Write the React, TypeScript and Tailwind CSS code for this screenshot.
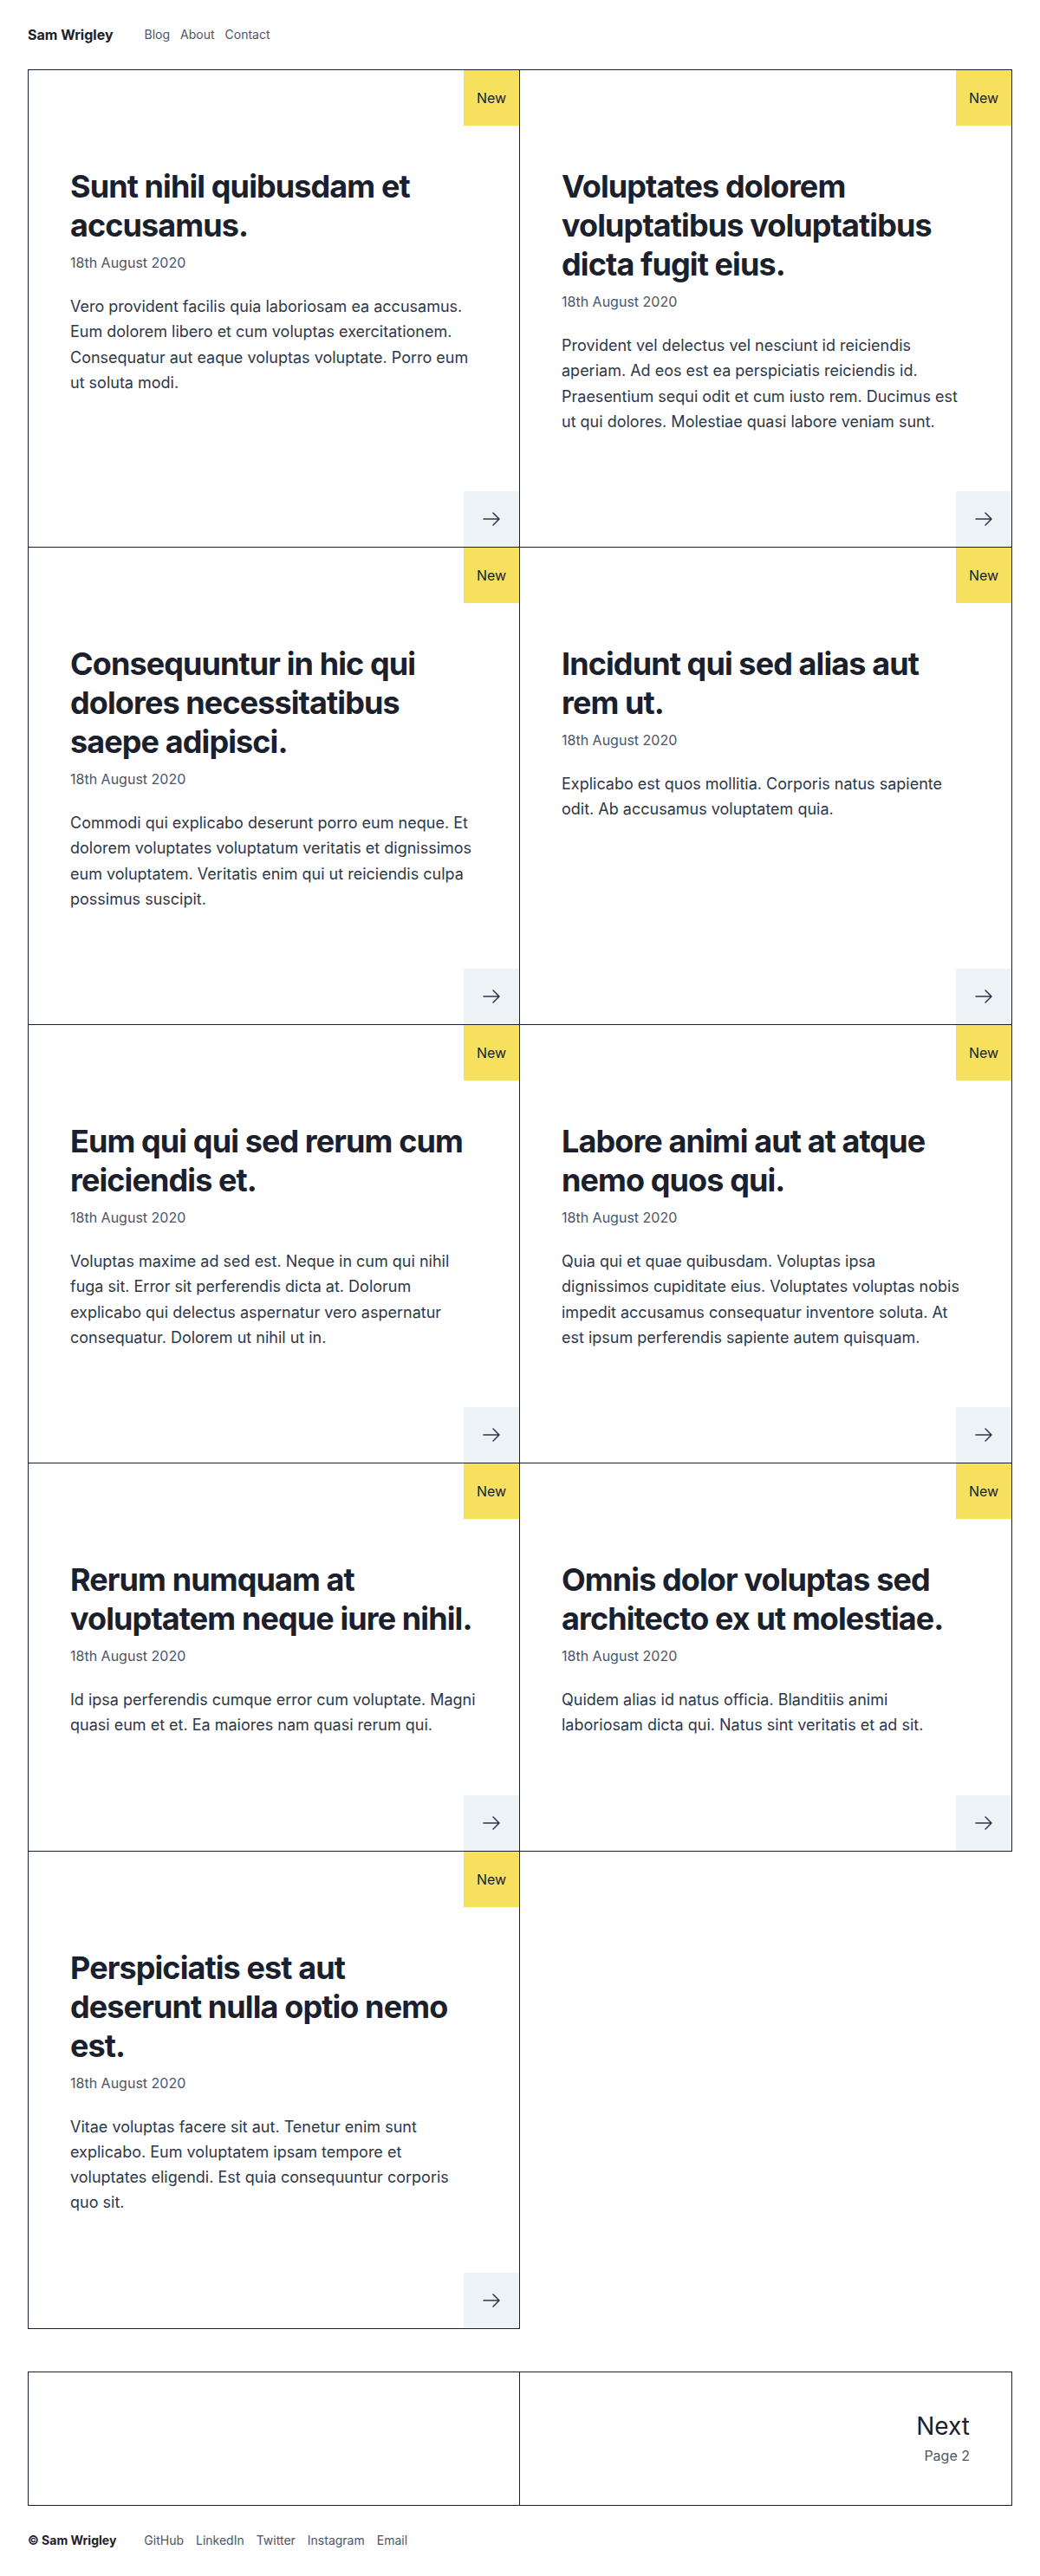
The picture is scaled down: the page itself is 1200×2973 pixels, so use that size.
const posts = [
  {
    title: 'Sunt nihil quibusdam et accusamus.',
    body: 'Vero provident facilis quia laboriosam ea accusamus. Eum dolorem libero et cum voluptas exercitationem. Consequatur aut eaque voluptas voluptate. Porro eum ut soluta modi.',
  },
  {
    title: 'Voluptates dolorem voluptatibus voluptatibus dicta fugit eius.',
    body: 'Provident vel delectus vel nesciunt id reiciendis aperiam. Ad eos est ea perspiciatis reiciendis id. Praesentium sequi odit et cum iusto rem. Ducimus est ut qui dolores. Molestiae quasi labore veniam sunt.',
  },
  {
    title: 'Consequuntur in hic qui dolores necessitatibus saepe adipisci.',
    body: 'Commodi qui explicabo deserunt porro eum neque. Et dolorem voluptates voluptatum veritatis et dignissimos eum voluptatem. Veritatis enim qui ut reiciendis culpa possimus suscipit.',
  },
  {
    title: 'Incidunt qui sed alias aut rem ut.',
    body: 'Explicabo est quos mollitia. Corporis natus sapiente odit. Ab accusamus voluptatem quia.',
  },
  {
    title: 'Eum qui qui sed rerum cum reiciendis et.',
    body: 'Voluptas maxime ad sed est. Neque in cum qui nihil fuga sit. Error sit perferendis dicta at. Dolorum explicabo qui delectus aspernatur vero aspernatur consequatur. Dolorem ut nihil ut in.',
  },
  {
    title: 'Labore animi aut at atque nemo quos qui.',
    body: 'Quia qui et quae quibusdam. Voluptas ipsa dignissimos cupiditate eius. Voluptates voluptas nobis impedit accusamus consequatur inventore soluta. At est ipsum perferendis sapiente autem quisquam.',
  },
  {
    title: 'Rerum numquam at voluptatem neque iure nihil.',
    body: 'Id ipsa perferendis cumque error cum voluptate. Magni quasi eum et et. Ea maiores nam quasi rerum qui.',
  },
  {
    title: 'Omnis dolor voluptas sed architecto ex ut molestiae.',
    body: 'Quidem alias id natus officia. Blanditiis animi laboriosam dicta qui. Natus sint veritatis et ad sit.',
  },
  {
    title: 'Perspiciatis est aut deserunt nulla optio nemo est.',
    body: 'Vitae voluptas facere sit aut. Tenetur enim sunt explicabo. Eum voluptatem ipsam tempore et voluptates eligendi. Est quia consequuntur corporis quo sit.',
  },
];

function ArrowRight() {
  return (
    <svg width="24" height="24" viewBox="0 0 24 24" fill="none" stroke="currentColor" strokeWidth="1.5" strokeLinecap="round" strokeLinejoin="round">
      <path d="M14 5l7 7m0 0l-7 7m7-7H3" />
    </svg>
  );
}

function PostCard({ title, body, index }: { title: string; body: string; index: number }) {
  const left = index % 2 === 0;
  const edges = (index < 2 ? ' border-t' : '') + (left ? ' border-l' : '');
  return (
    <article className={'flex flex-col border-r border-b border-[#1a202c]' + edges}>
      <div className="flex justify-end">
        <span className="flex h-16 w-16 items-center justify-center bg-[#f6e05e] text-base text-[#1a202c]">New</span>
      </div>
      <div className="flex-1 px-12 pt-12 pb-[66px]">
        <h2 className="text-4xl leading-tight font-bold tracking-tight text-[#1a202c]">{title}</h2>
        <p className="mt-2 text-base leading-6 text-[#4a5568]">18th August 2020</p>
        <p className={(left ? 'pr-0.5' : 'pr-1') + ' mt-6 text-lg leading-relaxed text-[#2d3748]'}>{body}</p>
      </div>
      <div className="flex justify-end">
        <a href="#" className="flex h-16 w-16 items-center justify-center bg-[#edf2f7] text-[#2d3748]">
          <ArrowRight />
        </a>
      </div>
    </article>
  );
}

export default function App() {
  return (
    <div className="min-h-screen bg-white px-8 font-['Inter',sans-serif] text-[#1a202c]">
      <header className="flex h-20 items-center">
        <a href="#" className="text-base font-bold text-[#1a202c]">Sam Wrigley</a>
        <nav className="ml-9 flex gap-3 text-sm text-[#4a5568]">
          <a href="#">Blog</a>
          <a href="#">About</a>
          <a href="#">Contact</a>
        </nav>
      </header>

      <main>
        <div className="grid grid-cols-2">
          {posts.map((post, index) => (
            <PostCard key={index} title={post.title} body={post.body} index={index} />
          ))}
        </div>

        <div className="mt-[49px] grid grid-cols-2 border border-[#1a202c]">
          <div className="h-[153px] border-r border-[#1a202c]"></div>
          <a href="#" className="flex h-[153px] flex-col items-end justify-center pr-12">
            <span className="text-[28px] leading-9 text-[#1a202c]">Next</span>
            <span className="mt-1 text-base leading-6 text-[#4a5568]">Page 2</span>
          </a>
        </div>
      </main>

      <footer className="flex h-20 items-center text-sm">
        <span className="font-bold text-[#1a202c]">© Sam Wrigley</span>
        <nav className="ml-8 flex gap-3.5 text-[#4a5568]">
          <a href="#">GitHub</a>
          <a href="#">LinkedIn</a>
          <a href="#">Twitter</a>
          <a href="#">Instagram</a>
          <a href="#">Email</a>
        </nav>
      </footer>
    </div>
  );
}
